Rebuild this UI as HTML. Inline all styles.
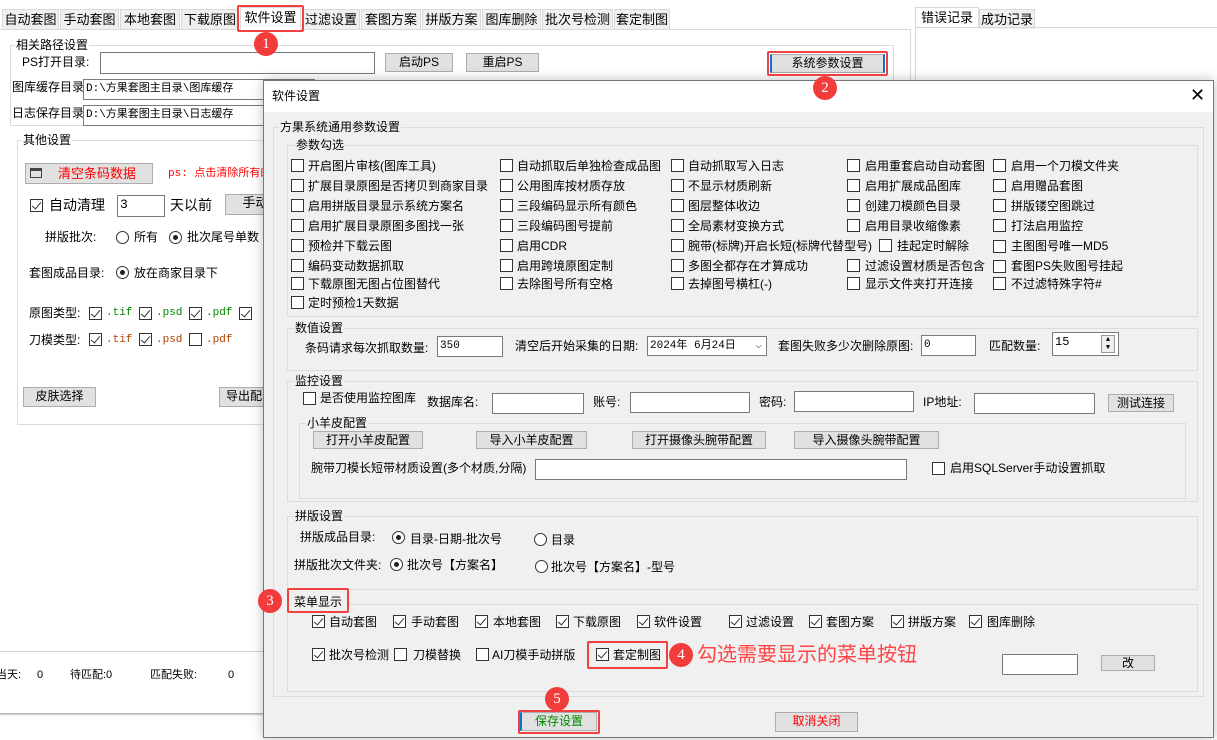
<!DOCTYPE html>
<html><head><meta charset="utf-8"><style>
*{box-sizing:border-box;margin:0;padding:0}
body{width:1217px;height:740px;overflow:hidden;background:#fff;position:relative;font-family:"Liberation Sans","Noto Sans CJK SC",sans-serif;font-size:12px;color:#000}
.a{position:absolute}
.t{position:absolute;line-height:16px;white-space:nowrap}
.tab{position:absolute;top:9px;height:20px;background:#f0f0f0;border:1px solid #d9d9d9;border-bottom:none;font-size:13px;line-height:19px;text-align:center}
.grp{position:absolute;border:1px solid #dcdcdc}
.lbl{position:absolute;top:-9px;left:6px;padding:0 1px;line-height:16px;white-space:nowrap;background:#f0f0f0}
.w .lbl{background:#fff}
.btn{position:absolute;background:#e1e1e1;border:1px solid #adadad;text-align:center;line-height:16px;white-space:nowrap}
.in{position:absolute;background:#fff;border:1px solid #7a7a7a;line-height:18px;padding-left:2px;white-space:nowrap;overflow:hidden;font-family:"Liberation Mono","Noto Sans CJK SC",monospace;font-size:11px}
.cb{position:absolute;width:13px;height:13px;border:1px solid #333;background:#fff}
.cb.on::after{content:"";position:absolute;left:3px;top:0px;width:4px;height:8px;border:solid #333;border-width:0 1.5px 1.5px 0;transform:rotate(40deg)}
.rd{position:absolute;width:13px;height:13px;border:1px solid #333;border-radius:50%;background:#fff}
.rd.on::after{content:"";position:absolute;left:3px;top:3px;width:5px;height:5px;border-radius:50%;background:#222}
.num{position:absolute;z-index:20;width:24px;height:24px;border-radius:50%;background:#f23b3b;color:#fff;font-family:"Liberation Serif",serif;font-size:15px;line-height:24px;text-align:center}
.red{position:absolute;z-index:19;border:2px solid #f04040;border-radius:2px}
</style></head><body>
<!-- tabs -->
<div class="a" style="left:0;top:29px;width:910px;height:1px;background:#d9d9d9"></div>
<div class="tab" style="left:2px;width:57px">自动套图</div>
<div class="tab" style="left:60px;width:59px">手动套图</div>
<div class="tab" style="left:120px;width:60px">本地套图</div>
<div class="tab" style="left:181px;width:58px">下载原图</div>
<div class="tab" style="left:240px;width:61px;top:7px;height:23px;background:#fff">软件设置</div>
<div class="tab" style="left:302px;width:58px">过滤设置</div>
<div class="tab" style="left:361px;width:60px">套图方案</div>
<div class="tab" style="left:422px;width:59px">拼版方案</div>
<div class="tab" style="left:482px;width:59px">图库删除</div>
<div class="tab" style="left:542px;width:71px">批次号检测</div>
<div class="tab" style="left:614px;width:56px">套定制图</div>
<div class="red" style="left:237px;top:5px;width:67px;height:27px"></div>
<div class="num" style="left:254px;top:32px">1</div>
<div class="a" style="left:910px;top:29px;width:1px;height:622px;background:#d9d9d9"></div>
<!-- right tabs -->
<div class="tab" style="left:915px;top:7px;width:64px;height:21px;background:#fff">错误记录</div>
<div class="tab" style="left:979px;width:56px">成功记录</div>
<div class="a" style="left:915px;top:27px;width:302px;height:1px;background:#d9d9d9"></div>
<div class="a" style="left:915px;top:27px;width:1px;height:600px;background:#d9d9d9"></div>
<!-- 相关路径 -->
<div class="grp w" style="left:10px;top:45px;width:884px;height:81px"><span class="lbl" style="left:4px">相关路径设置</span></div>
<span class="t" style="left:22px;top:54px">PS打开目录:</span>
<div class="in" style="left:100px;top:52px;width:275px;height:22px"></div>
<div class="btn" style="left:385px;top:53px;width:68px;height:19px">启动PS</div>
<div class="btn" style="left:466px;top:53px;width:73px;height:19px">重启PS</div>
<span class="t" style="left:12px;top:79px">图库缓存目录:</span>
<div class="in" style="left:83px;top:79px;width:232px;height:21px">D:\方果套图主目录\图库缓存</div>
<span class="t" style="left:12px;top:105px">日志保存目录:</span>
<div class="in" style="left:83px;top:105px;width:232px;height:21px">D:\方果套图主目录\日志缓存</div>
<div class="btn" style="left:770px;top:54px;width:115px;height:19px;border-left:2px solid #0078d7;border-right:2px solid #0078d7">系统参数设置</div>
<div class="red" style="left:767px;top:51px;width:121px;height:25px"></div>
<div class="num" style="left:813px;top:76px">2</div>
<!-- 其他设置 -->
<div class="grp w" style="left:17px;top:140px;width:260px;height:285px"><span class="lbl" style="left:4px">其他设置</span></div>
<div class="btn" style="left:25px;top:163px;width:128px;height:21px;color:#f00;font-size:13px;line-height:19px;padding-left:16px">清空条码数据</div>
<div class="a" style="left:30px;top:168px;width:12px;height:10px;border:1.5px solid #444;border-top:3px solid #444"></div>
<span class="t" style="left:168px;top:166px;color:#f00;font-size:11px;font-family:'Liberation Mono','Noto Sans CJK SC',monospace">ps: 点击清除所有的</span>
<div class="cb on" style="left:30px;top:199px"></div>
<span class="t" style="left:49px;top:196px;font-size:14px;line-height:18px">自动清理</span>
<div class="in" style="left:117px;top:195px;width:48px;height:22px;font-size:13px">3</div>
<span class="t" style="left:170px;top:196px;font-size:14px;line-height:18px">天以前</span>
<div class="btn" style="left:225px;top:194px;width:45px;height:21px;font-size:13px;padding-left:16px">手动</div>
<span class="t" style="left:45px;top:229px">拼版批次:</span>
<div class="rd" style="left:116px;top:231px"></div><span class="t" style="left:134px;top:229px">所有</span>
<div class="rd on" style="left:169px;top:231px"></div><span class="t" style="left:187px;top:229px">批次尾号单数</span>
<span class="t" style="left:29px;top:265px">套图成品目录:</span>
<div class="rd on" style="left:116px;top:266px"></div><span class="t" style="left:134px;top:265px">放在商家目录下</span>
<span class="t" style="left:29px;top:305px">原图类型:</span>
<div class="cb on" style="left:89px;top:307px"></div><span class="t" style="left:106px;top:305px;color:#080;font-family:'Liberation Mono',monospace;font-size:11px">.tif</span>
<div class="cb on" style="left:139px;top:307px"></div><span class="t" style="left:156px;top:305px;color:#080;font-family:'Liberation Mono',monospace;font-size:11px">.psd</span>
<div class="cb on" style="left:189px;top:307px"></div><span class="t" style="left:206px;top:305px;color:#080;font-family:'Liberation Mono',monospace;font-size:11px">.pdf</span>
<div class="cb on" style="left:239px;top:307px"></div>
<span class="t" style="left:29px;top:332px">刀模类型:</span>
<div class="cb on" style="left:89px;top:333px"></div><span class="t" style="left:106px;top:332px;color:#b04000;font-family:'Liberation Mono',monospace;font-size:11px">.tif</span>
<div class="cb on" style="left:139px;top:333px"></div><span class="t" style="left:156px;top:332px;color:#b04000;font-family:'Liberation Mono',monospace;font-size:11px">.psd</span>
<div class="cb" style="left:189px;top:333px"></div><span class="t" style="left:206px;top:332px;color:#b04000;font-family:'Liberation Mono',monospace;font-size:11px">.pdf</span>
<div class="btn" style="left:23px;top:387px;width:73px;height:20px">皮肤选择</div>
<div class="btn" style="left:219px;top:387px;width:50px;height:20px">导出配</div>
<!-- status -->
<div class="a" style="left:0;top:651px;width:264px;height:1px;background:#d0d0d0"></div>
<span class="t" style="left:-4px;top:667px;font-size:11px">当天:</span><span class="t" style="left:37px;top:667px;font-size:11px">0</span>
<span class="t" style="left:70px;top:667px;font-size:11px">待匹配:0</span>
<span class="t" style="left:150px;top:667px;font-size:11px">匹配失败:</span><span class="t" style="left:228px;top:667px;font-size:11px">0</span>
<div class="a" style="left:0;top:713px;width:264px;height:3px;background:linear-gradient(#aaa,#fff)"></div>
<!-- dialog -->
<div class="a" style="left:263px;top:80px;width:951px;height:658px;background:#f0f0f0;border:1px solid #777;box-shadow:0 0 12px rgba(0,0,0,.25)"></div>
<div class="a" style="left:264px;top:81px;width:949px;height:31px;background:#fff"></div>
<span class="t" style="left:272px;top:88px">软件设置</span>
<span class="t" style="left:1190px;top:84px;font-size:18px;line-height:22px;font-weight:300">✕</span>
<div class="grp" style="left:273px;top:127px;width:931px;height:570px"><span class="lbl" style="left:5px">方果系统通用参数设置</span></div>
<div class="grp" style="left:287px;top:145px;width:911px;height:172px"><span class="lbl" style="left:7px">参数勾选</span></div>
<!-- checkboxes grid -->
<div class="cb" style="left:291px;top:159px"></div><span class="t" style="left:308px;top:158px">开启图片审核(图库工具)</span>
<div class="cb" style="left:291px;top:179px"></div><span class="t" style="left:308px;top:178px">扩展目录原图是否拷贝到商家目录</span>
<div class="cb" style="left:291px;top:199px"></div><span class="t" style="left:308px;top:198px">启用拼版目录显示系统方案名</span>
<div class="cb" style="left:291px;top:219px"></div><span class="t" style="left:308px;top:218px">启用扩展目录原图多图找一张</span>
<div class="cb" style="left:291px;top:239px"></div><span class="t" style="left:308px;top:238px">预检并下载云图</span>
<div class="cb" style="left:291px;top:259px"></div><span class="t" style="left:308px;top:258px">编码变动数据抓取</span>
<div class="cb" style="left:291px;top:277px"></div><span class="t" style="left:308px;top:276px">下载原图无图占位图替代</span>
<div class="cb" style="left:291px;top:296px"></div><span class="t" style="left:308px;top:295px">定时预检1天数据</span>
<div class="cb" style="left:500px;top:159px"></div><span class="t" style="left:517px;top:158px">自动抓取后单独检查成品图</span>
<div class="cb" style="left:500px;top:179px"></div><span class="t" style="left:517px;top:178px">公用图库按材质存放</span>
<div class="cb" style="left:500px;top:199px"></div><span class="t" style="left:517px;top:198px">三段编码显示所有颜色</span>
<div class="cb" style="left:500px;top:219px"></div><span class="t" style="left:517px;top:218px">三段编码图号提前</span>
<div class="cb" style="left:500px;top:239px"></div><span class="t" style="left:517px;top:238px">启用CDR</span>
<div class="cb" style="left:500px;top:259px"></div><span class="t" style="left:517px;top:258px">启用跨境原图定制</span>
<div class="cb" style="left:500px;top:277px"></div><span class="t" style="left:517px;top:276px">去除图号所有空格</span>
<div class="cb" style="left:671px;top:159px"></div><span class="t" style="left:688px;top:158px">自动抓取写入日志</span>
<div class="cb" style="left:671px;top:179px"></div><span class="t" style="left:688px;top:178px">不显示材质刷新</span>
<div class="cb" style="left:671px;top:199px"></div><span class="t" style="left:688px;top:198px">图层整体收边</span>
<div class="cb" style="left:671px;top:219px"></div><span class="t" style="left:688px;top:218px">全局素材变换方式</span>
<div class="cb" style="left:671px;top:239px"></div><span class="t" style="left:688px;top:238px">腕带(标牌)开启长短(标牌代替型号)</span>
<div class="cb" style="left:671px;top:259px"></div><span class="t" style="left:688px;top:258px">多图全都存在才算成功</span>
<div class="cb" style="left:671px;top:277px"></div><span class="t" style="left:688px;top:276px">去掉图号横杠(-)</span>
<div class="cb" style="left:847px;top:159px"></div><span class="t" style="left:865px;top:158px">启用重套启动自动套图</span>
<div class="cb" style="left:847px;top:179px"></div><span class="t" style="left:865px;top:178px">启用扩展成品图库</span>
<div class="cb" style="left:847px;top:199px"></div><span class="t" style="left:865px;top:198px">创建刀模颜色目录</span>
<div class="cb" style="left:847px;top:219px"></div><span class="t" style="left:865px;top:218px">启用目录收缩像素</span>
<div class="cb" style="left:879px;top:239px"></div><span class="t" style="left:897px;top:238px">挂起定时解除</span>
<div class="cb" style="left:847px;top:259px"></div><span class="t" style="left:865px;top:258px">过滤设置材质是否包含</span>
<div class="cb" style="left:847px;top:277px"></div><span class="t" style="left:865px;top:276px">显示文件夹打开连接</span>
<div class="cb" style="left:993px;top:159px"></div><span class="t" style="left:1011px;top:158px">启用一个刀模文件夹</span>
<div class="cb" style="left:993px;top:179px"></div><span class="t" style="left:1011px;top:178px">启用赠品套图</span>
<div class="cb" style="left:993px;top:199px"></div><span class="t" style="left:1011px;top:198px">拼版镂空图跳过</span>
<div class="cb" style="left:993px;top:219px"></div><span class="t" style="left:1011px;top:218px">打法启用监控</span>
<div class="cb" style="left:993px;top:240px"></div><span class="t" style="left:1011px;top:238px">主图图号唯一MD5</span>
<div class="cb" style="left:993px;top:260px"></div><span class="t" style="left:1011px;top:258px">套图PS失败图号挂起</span>
<div class="cb" style="left:993px;top:277px"></div><span class="t" style="left:1011px;top:276px">不过滤特殊字符#</span>
<!-- 数值设置 -->
<div class="grp" style="left:287px;top:328px;width:911px;height:43px"><span class="lbl">数值设置</span></div>
<span class="t" style="left:305px;top:340px">条码请求每次抓取数量:</span>
<div class="in" style="left:437px;top:336px;width:66px;height:21px">350</div>
<span class="t" style="left:515px;top:338px">清空后开始采集的日期:</span>
<div class="in" style="left:647px;top:336px;width:120px;height:20px">2024年 6月24日<span style="position:absolute;right:4px;top:0;color:#555">⌵</span></div>
<span class="t" style="left:778px;top:338px">套图失败多少次删除原图:</span>
<div class="in" style="left:921px;top:335px;width:55px;height:21px">0</div>
<span class="t" style="left:989px;top:338px">匹配数量:</span>
<div class="in" style="left:1052px;top:332px;width:67px;height:24px;font-size:12px">15<div class="a" style="left:48px;top:2px;width:14px;height:18px;border:1px solid #999;background:#eee;font-size:7px;line-height:8px;text-align:center">▲<br>▼</div></div>
<!-- 监控设置 -->
<div class="grp" style="left:287px;top:381px;width:911px;height:121px"><span class="lbl">监控设置</span></div>
<div class="cb" style="left:303px;top:392px"></div><span class="t" style="left:320px;top:390px">是否使用监控图库</span>
<span class="t" style="left:427px;top:394px">数据库名:</span><div class="in" style="left:492px;top:393px;width:92px;height:21px"></div>
<span class="t" style="left:593px;top:394px">账号:</span><div class="in" style="left:630px;top:392px;width:120px;height:21px"></div>
<span class="t" style="left:759px;top:394px">密码:</span><div class="in" style="left:794px;top:391px;width:120px;height:21px"></div>
<span class="t" style="left:923px;top:394px">IP地址:</span><div class="in" style="left:974px;top:393px;width:121px;height:21px"></div>
<div class="btn" style="left:1108px;top:394px;width:66px;height:18px">测试连接</div>
<div class="grp" style="left:299px;top:423px;width:887px;height:76px"><span class="lbl" style="left:6px">小羊皮配置</span></div>
<div class="btn" style="left:313px;top:431px;width:110px;height:18px">打开小羊皮配置</div>
<div class="btn" style="left:476px;top:431px;width:111px;height:18px">导入小羊皮配置</div>
<div class="btn" style="left:632px;top:431px;width:134px;height:18px">打开摄像头腕带配置</div>
<div class="btn" style="left:794px;top:431px;width:145px;height:18px">导入摄像头腕带配置</div>
<span class="t" style="left:311px;top:460px">腕带刀模长短带材质设置(多个材质,分隔)</span>
<div class="in" style="left:535px;top:459px;width:372px;height:21px"></div>
<div class="cb" style="left:932px;top:462px"></div><span class="t" style="left:950px;top:460px">启用SQLServer手动设置抓取</span>
<!-- 拼版设置 -->
<div class="grp" style="left:287px;top:516px;width:911px;height:74px"><span class="lbl">拼版设置</span></div>
<span class="t" style="left:300px;top:529px">拼版成品目录:</span>
<div class="rd on" style="left:392px;top:531px"></div><span class="t" style="left:410px;top:531px">目录-日期-批次号</span>
<div class="rd" style="left:534px;top:533px"></div><span class="t" style="left:551px;top:532px">目录</span>
<span class="t" style="left:294px;top:557px">拼版批次文件夹:</span>
<div class="rd on" style="left:390px;top:558px"></div><span class="t" style="left:407px;top:557px">批次号【方案名】</span>
<div class="rd" style="left:535px;top:560px"></div><span class="t" style="left:551px;top:559px">批次号【方案名】-型号</span>
<!-- 菜单显示 -->
<div class="grp" style="left:287px;top:604px;width:911px;height:88px"></div>
<div class="a" style="left:289px;top:590px;width:58px;height:21px;background:#f0f0f0"></div>
<span class="t" style="left:294px;top:594px">菜单显示</span>
<div class="red" style="left:287px;top:588px;width:62px;height:25px"></div>
<div class="num" style="left:258px;top:589px">3</div>
<div class="cb on" style="left:312px;top:615px"></div><span class="t" style="left:329px;top:614px">自动套图</span>
<div class="cb on" style="left:393px;top:615px"></div><span class="t" style="left:411px;top:614px">手动套图</span>
<div class="cb on" style="left:475px;top:615px"></div><span class="t" style="left:493px;top:614px">本地套图</span>
<div class="cb on" style="left:556px;top:615px"></div><span class="t" style="left:573px;top:614px">下载原图</span>
<div class="cb on" style="left:637px;top:615px"></div><span class="t" style="left:654px;top:614px">软件设置</span>
<div class="cb on" style="left:729px;top:615px"></div><span class="t" style="left:746px;top:614px">过滤设置</span>
<div class="cb on" style="left:809px;top:615px"></div><span class="t" style="left:826px;top:614px">套图方案</span>
<div class="cb on" style="left:891px;top:615px"></div><span class="t" style="left:908px;top:614px">拼版方案</span>
<div class="cb on" style="left:969px;top:615px"></div><span class="t" style="left:987px;top:614px">图库删除</span>
<div class="cb on" style="left:312px;top:648px"></div><span class="t" style="left:329px;top:647px">批次号检测</span>
<div class="cb" style="left:394px;top:648px"></div><span class="t" style="left:413px;top:647px">刀模替换</span>
<div class="cb" style="left:476px;top:648px"></div><span class="t" style="left:492px;top:647px">AI刀模手动拼版</span>
<div class="cb on" style="left:596px;top:648px"></div><span class="t" style="left:613px;top:647px">套定制图</span>
<div class="red" style="left:587px;top:641px;width:81px;height:28px"></div>
<div class="num" style="left:669px;top:643px">4</div>
<span class="t" style="left:697px;top:643px;color:#f44;font-size:20px;line-height:24px">勾选需要显示的菜单按钮</span>
<div class="in" style="left:1002px;top:654px;width:76px;height:21px"></div>
<div class="btn" style="left:1101px;top:655px;width:54px;height:16px;line-height:14px">改</div>
<!-- bottom -->
<div class="btn" style="left:520px;top:712px;width:77px;height:19px;color:#080;border-left:2px solid #0078d7">保存设置</div>
<div class="red" style="left:518px;top:710px;width:82px;height:24px"></div>
<div class="num" style="left:545px;top:687px">5</div>
<div class="btn" style="left:775px;top:712px;width:83px;height:20px;color:#f00">取消关闭</div>
</body></html>
